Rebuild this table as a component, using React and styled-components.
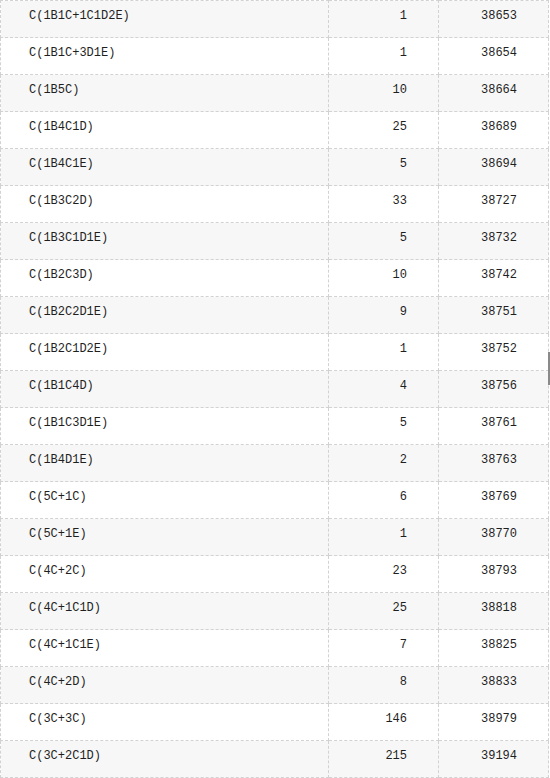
import React from "react";
import styled, { createGlobalStyle } from "styled-components";

const Global = createGlobalStyle`
  html, body { margin: 0; padding: 0; background: #ffffff; }
  body { width: 550px; height: 778px; overflow: hidden; }
`;

const Page = styled.div`
  position: relative;
  width: 550px;
  height: 778px;
  background: #ffffff;
`;

const Table = styled.table`
  width: 548px;
  border-collapse: collapse;
  table-layout: fixed;
  font-family: "Liberation Mono", "DejaVu Sans Mono", monospace;
  font-size: 12px;
  color: #1f1f1f;
`;

const Row = styled.tr`
  background: ${(p) => (p.$shaded ? "#f7f7f7" : "#ffffff")};
`;

const Cell = styled.td`
  border: 1px dashed #d2d2d2;
  height: 16px;
  line-height: 16px;
  padding: 7px ${(p) => (p.$align === "right" ? "31px" : "0")} 13px
    ${(p) => (p.$align === "right" ? "0" : "28px")};
  text-align: ${(p) => p.$align || "left"};
  white-space: nowrap;
`;

const ScrollMark = styled.div`
  position: absolute;
  left: 548px;
  top: 352px;
  width: 2px;
  height: 33px;
  background: #8a8a8a;
`;

const rows = [
  ["C(1B1C+1C1D2E)", 1, 38653],
  ["C(1B1C+3D1E)", 1, 38654],
  ["C(1B5C)", 10, 38664],
  ["C(1B4C1D)", 25, 38689],
  ["C(1B4C1E)", 5, 38694],
  ["C(1B3C2D)", 33, 38727],
  ["C(1B3C1D1E)", 5, 38732],
  ["C(1B2C3D)", 10, 38742],
  ["C(1B2C2D1E)", 9, 38751],
  ["C(1B2C1D2E)", 1, 38752],
  ["C(1B1C4D)", 4, 38756],
  ["C(1B1C3D1E)", 5, 38761],
  ["C(1B4D1E)", 2, 38763],
  ["C(5C+1C)", 6, 38769],
  ["C(5C+1E)", 1, 38770],
  ["C(4C+2C)", 23, 38793],
  ["C(4C+1C1D)", 25, 38818],
  ["C(4C+1C1E)", 7, 38825],
  ["C(4C+2D)", 8, 38833],
  ["C(3C+3C)", 146, 38979],
  ["C(3C+2C1D)", 215, 39194],
];

export default function App() {
  return (
    <Page>
      <Global />
      <Table>
        <colgroup>
          <col style={{ width: 328 }} />
          <col style={{ width: 110 }} />
          <col style={{ width: 110 }} />
        </colgroup>
        <tbody>
          {rows.map(([name, count, total], i) => (
            <Row key={name} $shaded={i % 2 === 0}>
              <Cell>{name}</Cell>
              <Cell $align="right">{count}</Cell>
              <Cell $align="right">{total}</Cell>
            </Row>
          ))}
        </tbody>
      </Table>
      <ScrollMark />
    </Page>
  );
}
